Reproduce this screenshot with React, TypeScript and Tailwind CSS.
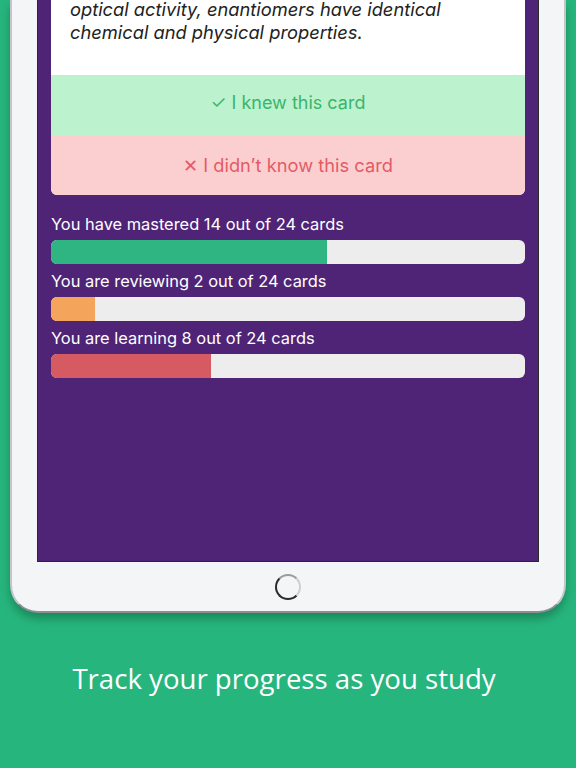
const bars = [
  { label: "You have mastered 14 out of 24 cards", width: 276, color: "bg-[#2eb582]" },
  { label: "You are reviewing 2 out of 24 cards", width: 44, color: "bg-[#f5a55b]" },
  { label: "You are learning 8 out of 24 cards", width: 160, color: "bg-[#d55a62]" },
];

const App = () => {
  return (
    <div className="w-[576px] h-[768px] overflow-hidden bg-[#27b57e] flex flex-col" style={{ fontFamily: "Inter, 'Noto Sans', sans-serif" }}>
      {/* tablet */}
      <div className="ml-[10px] w-[556px] h-[613px] shrink-0 bg-[#f4f5f7] border-x-2 border-b-2 border-x-[#c3c5c8] border-b-[#8d8e90] rounded-b-[28px] shadow-[0_6px_8px_rgba(0,60,30,0.35)] flex flex-col items-center">
        <div className="w-[502px] h-[562px] shrink-0 bg-[#4f2477] border-x border-b border-[#2a2a2a] px-[13px] flex flex-col">
          <div className="bg-white rounded-b-[6px] overflow-hidden">
            <p className="px-[19px] -mt-[2px] pb-[31px] italic font-normal text-[18.3px] leading-[23px] text-[#222]">
              optical activity, enantiomers have identical chemical and physical properties.
            </p>
            <div className="h-[61px] bg-[#bdf2cf] text-[#3bb56b] text-[18px] flex items-center justify-center pb-[6px]">
              ✓ I knew this card
            </div>
            <div className="h-[59px] bg-[#fbcfd0] text-[#e35b66] text-[18.3px] flex items-center justify-center">
              ✕ I didn’t know this card
            </div>
          </div>
          <div className="mt-[19px] flex flex-col gap-[7px]">
            {bars.map((b) => (
              <div key={b.label} className="flex flex-col gap-[6px]">
                <div className="text-white text-[16.4px] leading-[20px]">{b.label}</div>
                <div className="h-[24px] bg-[#ededed] rounded-[6px] overflow-hidden flex">
                  <div className={`h-full ${b.color}`} style={{ width: `${b.width}px` }} />
                </div>
              </div>
            ))}
          </div>
        </div>
        <div className="flex-1 flex items-center justify-center">
          <div className="w-[26px] h-[26px] rounded-full border-[2px] border-[#2b2b2b] border-r-[#cfcfcf] border-t-[#9a9a9a]" />
        </div>
      </div>
      <div className="flex-1 flex items-start justify-center pt-[47px] pr-[8px]">
        <h1 className="text-white text-[27.6px] leading-[36px]" style={{ fontFamily: "'Open Sans', sans-serif" }}>
          Track your progress as you study
        </h1>
      </div>
    </div>
  );
};

export default App;
